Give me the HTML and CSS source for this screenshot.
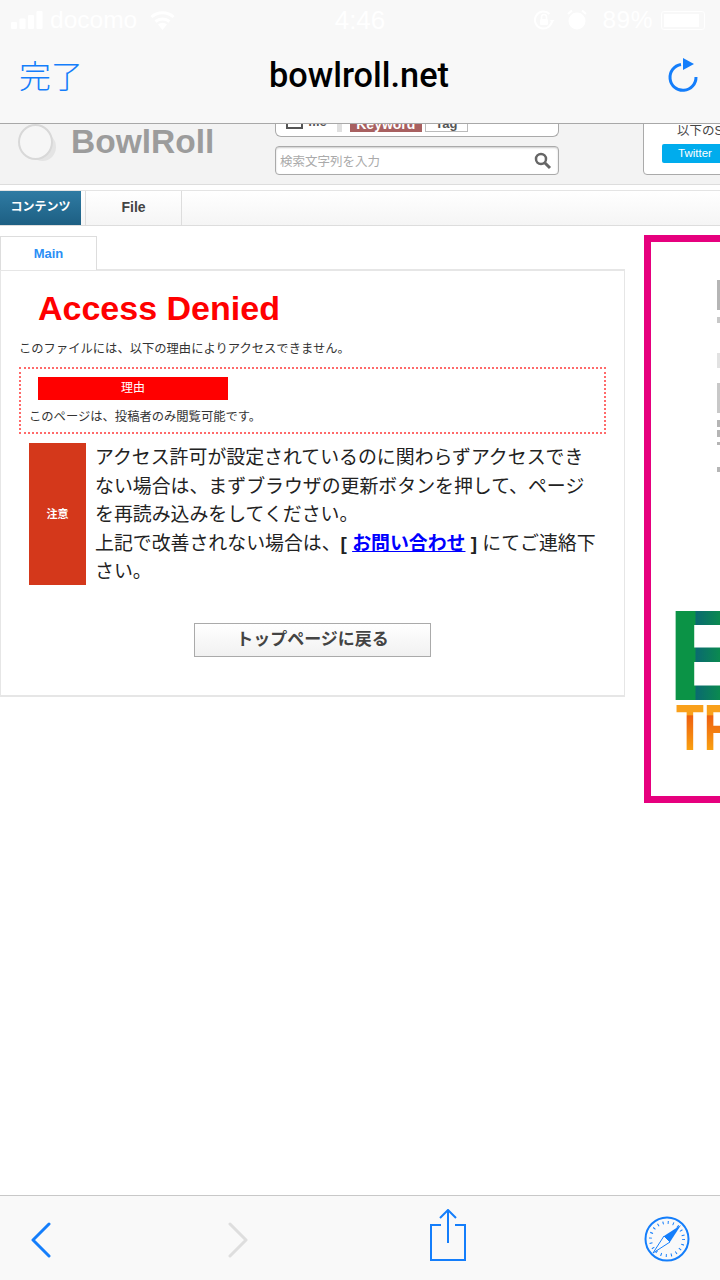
FILE: index.html
```html
<!DOCTYPE html>
<html lang="ja">
<head>
    <meta charset="UTF-8">
    <meta name="viewport" content="width=device-width, initial-scale=1.0">
    <title>bowlroll.net</title>
    <link rel="stylesheet" href="styles.css">
</head>
<body>

    <div class="browser">
        <header class="top-bar">
            <div class="status-bar">
                <div class="status-left">
                    <svg class="signal" width="32" height="18" viewBox="0 0 32 18"><rect x="0" y="11" width="6" height="7" rx="1"/><rect x="8.500" y="7.500" width="6" height="10.500" rx="1"/><rect x="17" y="4" width="6" height="14" rx="1"/><rect x="25.500" y="0" width="6" height="18" rx="1"/></svg>
                    <span class="carrier">docomo</span>
                    <svg class="wifi" width="27" height="20" viewBox="0 0 27 20"><path d="M13.500 20 L9 14.500 A7 7 0 0 1 18 14.500 Z"/><path d="M6.500 11.500 A11 11 0 0 1 20.500 11.500" fill="none" stroke="#fff" stroke-width="3"/><path d="M2.500 7 A16.500 16.500 0 0 1 24.500 7" fill="none" stroke="#fff" stroke-width="3"/></svg>
                </div>
                <span class="clock">4:46</span>
                <div class="status-right">
                    <svg width="22" height="22" viewBox="0 0 22 22"><path d="M19 11 A8.500 8.500 0 1 1 16.500 5" fill="none" stroke="#fff" stroke-width="2"/><path d="M17 11 L21.500 11 L19 14 Z"/><rect x="7" y="10" width="8" height="6" rx="1"/><path d="M8.500 10 V8 A2.500 2.500 0 0 1 13.500 8 V10" fill="none" stroke="#fff" stroke-width="1.500"/></svg>
                    <svg class="alarm" width="20" height="22" viewBox="0 0 20 22"><circle cx="10" cy="12" r="8.500"/><path d="M1 5 L5 1.500 M19 5 L15 1.500" stroke="#fff" stroke-width="2"/></svg>
                    <span class="battery-text">89%</span>
                    <div class="battery"><div class="battery-level"></div></div>
                </div>
            </div>
            <div class="nav-bar">
                <span class="done">完了</span>
                <span class="domain">bowlroll.net</span>
                <svg class="reload" width="32" height="36" viewBox="0 0 32 36"><path d="M14 7.500 A13 13 0 1 0 29 20" fill="none" stroke="#147efb" stroke-width="3"/><path d="M16 1 L27 7 L16 13 Z" fill="#147efb"/></svg>
            </div>
        </header>

        <main class="page">
            <div class="site-header">
                <div class="logo">
                    <div class="logo-mark"></div>
                    <span class="logo-text">BowlRoll</span>
                </div>
                <div class="search-area">
                    <div class="search-type">
                        <span class="checkbox"></span>
                        <span class="type-file">file</span>
                        <span class="type-divider"></span>
                        <span class="type-keyword">Keyword</span>
                        <span class="type-tag">Tag</span>
                    </div>
                    <div class="search-box">
                        <span class="search-placeholder">検索文字列を入力</span>
                        <svg width="18" height="18" viewBox="0 0 18 18"><circle cx="7" cy="7" r="5" fill="none" stroke="#666" stroke-width="2.500"/><path d="M11 11 L16 16" stroke="#666" stroke-width="3"/></svg>
                    </div>
                </div>
                <div class="share-box">
                    <div class="share-text">以下のSNS</div>
                    <div class="twitter-btn">Twitter</div>
                </div>
            </div>

            <nav class="site-nav">
                <div class="nav-contents">コンテンツ</div>
                <div class="nav-file">File</div>
            </nav>

            <div class="content">
                <div class="main-column">
                    <div class="tab">Main</div>
                    <div class="panel">
                        <h1>Access Denied</h1>
                        <p class="lead">このファイルには、以下の理由によりアクセスできません。</p>
                        <div class="reason-box">
                            <div class="reason-title">理由</div>
                            <p class="reason-text">このページは、投稿者のみ閲覧可能です。</p>
                        </div>
                        <div class="notice">
                            <div class="notice-label">注意</div>
                            <p class="notice-text">アクセス許可が設定されているのに関わらずアクセスできない場合は、まずブラウザの更新ボタンを押して、ページを再読み込みをしてください。<br>上記で改善されない場合は、<b>[ <a href="#">お問い合わせ</a> ]</b> にてご連絡下さい。</p>
                        </div>
                        <div class="back-row">
                            <a class="back-btn" href="#">トップページに戻る</a>
                        </div>
                    </div>
                </div>

                <aside class="ad">
                    <div class="ad-fragments">
                        <span class="frag frag-1"></span>
                        <span class="frag frag-2"></span>
                        <span class="frag frag-3"></span>
                        <span class="frag frag-4"></span>
                        <span class="frag frag-5"></span>
                        <span class="frag frag-6"></span>
                        <span class="frag frag-7"></span>
                        <span class="frag frag-8"></span>
                    </div>
                    <div class="ad-big">E</div>
                    <div class="ad-sub">TR</div>
                </aside>
            </div>
        </main>

        <footer class="bottom-bar">
            <svg class="btn-back" width="24" height="36" viewBox="0 0 24 36"><path d="M20 2 L4 18 L20 34" fill="none" stroke="#147efb" stroke-width="3" stroke-linecap="round" stroke-linejoin="round"/></svg>
            <svg class="btn-forward" width="24" height="36" viewBox="0 0 24 36"><path d="M4 2 L20 18 L4 34" fill="none" stroke="#dedede" stroke-width="3" stroke-linecap="round" stroke-linejoin="round"/></svg>
            <svg class="btn-share" width="38" height="52" viewBox="0 0 38 52"><path d="M12 16 H2 V51 H36 V16 H26" fill="none" stroke="#147efb" stroke-width="2"/><path d="M19 34 V2 M11 9 L19 1 L27 9" fill="none" stroke="#147efb" stroke-width="2"/></svg>
            <svg class="btn-compass" width="46" height="46" viewBox="0 0 46 46">
                <circle cx="23" cy="23" r="21.500" fill="none" stroke="#147efb" stroke-width="2"/>
                <circle cx="23" cy="23" r="16.500" fill="none" stroke="#147efb" stroke-width="3" stroke-dasharray="1 4.200"/>
                <path d="M37 9 L20 20 L26 26 Z" fill="#147efb"/>
                <path d="M9 37 L20 20 L26 26 Z" fill="#f9f9f9" stroke="#147efb" stroke-width="1"/>
            </svg>
        </footer>
    </div>

</body>
</html>
```

FILE: styles.css
```css
* {
    box-sizing: border-box;
}

body {
    margin: 0;
    background-color: #fff;
    font-family: 'Liberation Sans', 'Noto Sans CJK JP', sans-serif;
    color: #222;
}

.browser {
    width: 720px;
    height: 1280px;
    display: flex;
    flex-direction: column;
    overflow: hidden;
}

/* safari top bar */
.top-bar {
    height: 124px;
    flex: none;
    background-color: #f8f8f8;
    border-bottom: 1px solid #a8a8a8;
}

.status-bar {
    height: 40px;
    padding: 0 15px 0 11px;
    display: grid;
    grid-template-columns: 1fr auto 1fr;
    align-items: center;
    color: #fff;
    fill: #fff;
    font-size: 24.5px;
}

.status-left, .status-right {
    display: flex;
    align-items: center;
}

.status-right {
    justify-content: flex-end;
    gap: 12px;
}

.carrier {
    margin: 0 12px 0 7px;
}

.clock {
    margin-left: 4px;
    font-size: 26px;
}

.battery-text {
    margin: 0 -4px 0 3px;
    letter-spacing: 0.5px;
}

.battery {
    width: 44px;
    height: 19px;
    padding: 2px;
    border: 1px solid #fff;
    border-radius: 3px;
}

.battery-level {
    width: 35px;
    height: 13px;
    background-color: #fff;
}

.nav-bar {
    height: 83px;
    padding: 0 21px 16px 19px;
    display: grid;
    grid-template-columns: 1fr auto 1fr;
    align-items: center;
}

.done {
    font-size: 32px;
    color: #147efb;
    font-family: 'Noto Sans CJK JP', sans-serif;
    font-weight: 300;
}

.domain {
    margin-top: 3px;
    font-family: 'Roboto', sans-serif;
    font-size: 34.3px;
    font-weight: 500;
    color: #000;
}

.reload {
    margin-top: 2px;
    justify-self: end;
}

/* site header, cut off by the top bar */
.page {
    flex: 1;
    overflow: hidden;
}

.site-header {
    height: 61px;
    padding-left: 18px;
    display: flex;
    background: #f3f3f3;
    border-bottom: 1px solid #ddd;
    overflow: hidden;
}

.logo {
    width: 257px;
    height: 36px;
    flex: none;
    display: flex;
    align-items: center;
}

.logo-mark {
    width: 35px;
    height: 36px;
    margin-right: 18px;
    border: 2px solid #d8d8d8;
    border-radius: 50%;
    background-color: #f6f6f6;
    box-shadow: 7px 5px 0 -4px #e4e4e4;
}

.logo-text {
    font-size: 33.5px;
    font-weight: 700;
    color: #9c9c9c;
}

.search-area {
    width: 284px;
    flex: none;
    margin-top: -13px;
}

.search-type {
    height: 26px;
    padding-left: 10px;
    display: flex;
    align-items: flex-start;
    background-color: #fff;
    border: 1px solid #aaa;
    border-top: 0;
    border-radius: 0 0 6px 6px;
    font-size: 14px;
    color: #555;
}

.checkbox {
    width: 17px;
    height: 16px;
    margin-top: 2px;
    flex: none;
    border: 2px solid #555;
}

.type-file {
    margin: 0 0 0 5px;
    font-size: 13px;
    font-weight: 700;
    line-height: 22px;
}

.type-divider {
    width: 5px;
    height: 19px;
    margin: 2px 8px 0 10px;
    background-color: #e0e0e0;
}

.type-keyword {
    width: 72px;
    height: 19px;
    margin-top: 2px;
    background-color: #a86060;
    color: #fff;
    font-weight: 700;
    line-height: 22px;
    text-align: center;
    overflow: hidden;
}

.type-tag {
    width: 43px;
    height: 19px;
    margin: 2px 0 0 3px;
    border: 1px solid #bbb;
    font-size: 13px;
    font-weight: 700;
    line-height: 20px;
    text-align: center;
    overflow: hidden;
}

.search-box {
    height: 29px;
    margin-top: 9px;
    padding: 0 6px 0 4px;
    display: flex;
    align-items: center;
    justify-content: space-between;
    background-color: #fff;
    border: 1px solid #aaa;
    border-radius: 4px;
    box-shadow: inset 0 1px 2px #ccc;
}

.search-placeholder {
    font-size: 12.5px;
    color: #aaa;
}

.share-box {
    width: 120px;
    flex: none;
    margin: -12px -43px 9px 84px;
    padding: 7px 0 0 18px;
    background-color: #fff;
    border: 1px solid #aaa;
    border-radius: 4px;
}

.share-text {
    margin-left: 15px;
    font-size: 12.5px;
    color: #444;
    white-space: nowrap;
}

.twitter-btn {
    width: 66px;
    height: 19px;
    margin-top: 5px;
    background-color: #00aced;
    border-radius: 2px;
    color: #fff;
    font-size: 11.5px;
    line-height: 19px;
    text-align: center;
}

.site-nav {
    height: 36px;
    margin-top: 5px;
    display: flex;
    background: linear-gradient(#fff, #f5f5f5);
    border-top: 1px solid #e4e4e4;
    border-bottom: 1px solid #ddd;
}

.nav-contents {
    width: 81px;
    background: linear-gradient(#2f7ba3, #1d5f83);
    color: #fff;
    font-size: 12px;
    font-weight: 700;
    line-height: 33px;
    text-align: center;
}

.nav-file {
    width: 97px;
    margin-left: 4px;
    border-left: 1px solid #ddd;
    border-right: 1px solid #ddd;
    color: #444;
    font-size: 14px;
    font-weight: 700;
    line-height: 33px;
    text-align: center;
}

/* page body */
.content {
    padding-top: 9px;
    display: flex;
    gap: 19px;
    align-items: flex-start;
}

.main-column {
    width: 625px;
    flex: none;
}

.tab {
    width: 97px;
    height: 34px;
    margin-top: 1px;
    margin-bottom: -1px;
    position: relative;
    background-color: #fff;
    border: 1px solid #ddd;
    border-bottom: 0;
    color: #2a8ef5;
    font-size: 13px;
    font-weight: 700;
    line-height: 34px;
    text-align: center;
}

.panel {
    height: 428px;
    padding: 0 18px 0 18px;
    border: 2px solid #e6e6e6;
    border-left-width: 1px;
    border-right-width: 1px;
}

h1 {
    margin: 19px 0 0 19px;
    color: #f00;
    font-size: 34px;
    line-height: 37px;
}

.lead {
    margin: 13px 0 0;
    font-size: 12.3px;
    line-height: 18px;
    color: #333;
}

.reason-box {
    height: 67px;
    margin-top: 9px;
    padding: 8px 8px 0 17px;
    border: 2px dotted #ff6a6a;
}

.reason-title {
    width: 190px;
    height: 23px;
    background-color: #f00;
    color: #fff;
    font-size: 12px;
    line-height: 23px;
    text-align: center;
}

.reason-text {
    margin: 8px 0 0 -9px;
    font-size: 12.3px;
    line-height: 18px;
    color: #333;
}

.notice {
    margin: 9px 6px 0 10px;
    display: flex;
    gap: 9px;
}

.notice-label {
    width: 57px;
    height: 142px;
    flex: none;
    background-color: #d4381b;
    color: #fff;
    font-size: 11px;
    font-weight: 700;
    line-height: 142px;
    text-align: center;
}

.notice-text {
    margin: 0;
    padding-top: 1px;
    font-size: 18.9px;
    line-height: 28.5px;
    color: #222;
}

.notice-text a {
    color: #00f;
}

.back-row {
    margin-top: 36px;
    display: flex;
    justify-content: center;
}

.back-btn {
    width: 237px;
    height: 34px;
    background: linear-gradient(#fff, #f1f1f1);
    border: 1px solid #aaa;
    color: #444;
    font-size: 17px;
    font-weight: 700;
    line-height: 31px;
    text-align: center;
    text-decoration: none;
}

/* advert on the right, mostly off screen */
.ad {
    width: 120px;
    height: 568px;
    flex: none;
    padding: 38px 0 0 25px;
    background-color: #fff;
    border: 7px solid #e6007e;
    overflow: hidden;
}

.ad-fragments {
    height: 331px;
    padding-left: 41px;
    display: flex;
    flex-direction: column;
    filter: blur(0.6px);
}

.frag {
    width: 3px;
    flex: none;
    background-color: #b5b5b5;
}

.frag-1 {
    height: 30px;
}

.frag-2 {
    height: 6px;
    margin-top: 7px;
    background-color: #c8c8c8;
}

.frag-3 {
    height: 15px;
    margin-top: 30px;
    background-color: #e2e2e2;
}

.frag-4 {
    height: 30px;
    margin-top: 15px;
    background-color: #c8c8c8;
}

.frag-5 {
    height: 7px;
    margin-top: 7px;
}

.frag-6 {
    height: 7px;
    margin-top: 3px;
}

.frag-7 {
    height: 3px;
    margin-top: 5px;
}

.frag-8 {
    height: 5px;
    margin-top: 22px;
}

.ad-big {
    width: 110px;
    margin-left: -9px;
    font-size: 129px;
    font-weight: 700;
    line-height: 89px;
    background: linear-gradient(90deg, #0b9346 0, #0b9346 28px, #0a6a70 29px, #0b9346 60px);
    -webkit-background-clip: text;
    background-clip: text;
    color: transparent;
}

.ad-sub {
    margin-top: 5px;
    font-size: 65px;
    font-weight: 700;
    line-height: 45px;
    background: linear-gradient(#f9a01b 0, #f9a01b 22%, #ee6010 24%, #f9a010 100%);
    -webkit-background-clip: text;
    background-clip: text;
    color: transparent;
    transform: scaleX(0.7);
    transform-origin: left;
    white-space: nowrap;
}

/* safari bottom bar */
.bottom-bar {
    height: 85px;
    flex: none;
    padding-left: 29px;
    display: flex;
    align-items: center;
    background-color: #f9f9f9;
    border-top: 1px solid #c8c8c8;
}

.btn-back {
    margin-top: 3px;
}

.btn-forward {
    margin: 3px 0 0 173px;
}

.btn-share {
    margin: 0 0 6px 179px;
}

.btn-compass {
    margin: 1px 0 0 177px;
}
```
